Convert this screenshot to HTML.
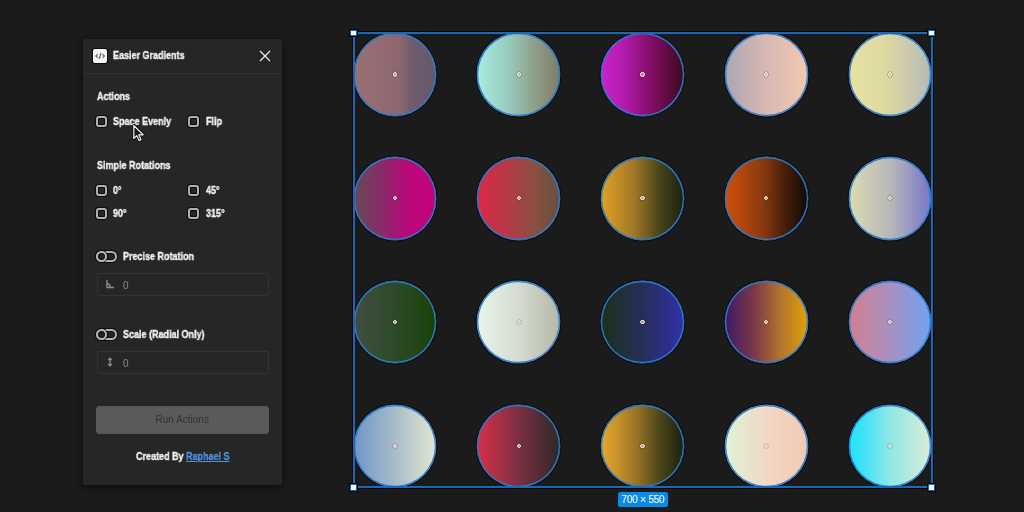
<!DOCTYPE html>
<html><head><meta charset="utf-8">
<style>
*{box-sizing:border-box;margin:0;padding:0}
html,body{width:1024px;height:512px;overflow:hidden;background:#1b1b1b;font-family:"Liberation Sans",sans-serif;position:relative}
.abs{position:absolute}
.panel{position:absolute;left:83px;top:39px;width:198.6px;height:446px;background:#262626;box-shadow:0 2px 9px rgba(0,0,0,.6);border-radius:2px}
.hdr{position:absolute;left:0;top:0;width:199px;height:35px;border-bottom:1px solid #313131}
.t{position:absolute;color:#f2f2f2;font-weight:700;font-size:10px;letter-spacing:0px;-webkit-text-stroke:0.35px #f2f2f2;transform:scaleX(0.9);transform-origin:0 0;will-change:transform;white-space:nowrap;line-height:10px}
.cb{position:absolute;width:11px;height:11px;border:2.2px solid #b0b0b0;border-radius:3px;box-shadow:0 0 0 1px #0c0c0c, inset 0 0 0 1px #0c0c0c}
.tg{position:absolute;width:21px;height:11px;border:2px solid #b4b4b4;border-radius:6px;box-shadow:0 0 0 1px #0c0c0c, inset 0 0 0 1px #0c0c0c}
.tg::after{content:"";box-sizing:border-box;position:absolute;left:-2px;top:-2px;width:11px;height:11px;border:2px solid #b4b4b4;border-radius:50%;box-shadow:0 0 0 1px #0c0c0c, inset 0 0 0 1px #0c0c0c}
.inp{position:absolute;left:13.5px;width:172px;border:1px solid #333;border-radius:2px;background:#262626}
.c{position:absolute;width:82.57px;height:82.57px;border-radius:50%;box-shadow:0 0 0 1.2px #2a7ed0 inset, 0 0 0 0.4px #2a7ed0, 0 0 0 1.4px rgba(0,0,0,.6)}
.dot{position:absolute;width:4.2px;height:4.2px;border-radius:50%;background:rgba(210,180,180,.7);border:1.1px solid #f2e6de;box-shadow:0 0 0 0.5px rgba(0,0,0,.35)}
.sel{position:absolute;left:352.5px;top:32.2px;width:580.0px;height:456.1px;border:2px solid #1b68b8;box-shadow:0 0 0 1px #0c0606}
.h{position:absolute;width:6.6px;height:6.6px;background:#f4fbff;border:1px solid #1a66b4;box-shadow:0 0 0 1px #0c0606}
</style></head><body>
<div class="c" style="left:353.50px;top:33.20px;background:linear-gradient(90deg,#9c7074 0%,#8c6670 55%,#6e5c6c 72%,#66586a 100%)"></div>
<div class="dot" style="left:392.69px;top:72.39px"></div>
<div class="c" style="left:477.36px;top:33.20px;background:linear-gradient(90deg,#a8ece4 0%,#98c8b8 40%,#8e9e88 70%,#807c66 100%)"></div>
<div class="dot" style="left:516.54px;top:72.39px"></div>
<div class="c" style="left:601.21px;top:33.20px;background:linear-gradient(90deg,#cc22cc 0%,#b01aa8 30%,#7a0c5c 65%,#380a1e 100%)"></div>
<div class="dot" style="left:640.40px;top:72.39px"></div>
<div class="c" style="left:725.07px;top:33.20px;background:linear-gradient(90deg,#aca6b2 0%,#d8b8b4 50%,#f2c8b0 100%)"></div>
<div class="dot" style="left:764.26px;top:72.39px"></div>
<div class="c" style="left:848.93px;top:33.20px;background:linear-gradient(90deg,#e8e2a0 0%,#dcd8a0 45%,#c8c8b0 75%,#b6bab2 100%)"></div>
<div class="dot" style="left:888.11px;top:72.39px"></div>
<div class="c" style="left:353.50px;top:157.06px;background:linear-gradient(90deg,#664a58 0%,#8a2a6a 35%,#b80878 65%,#c8007c 100%)"></div>
<div class="dot" style="left:392.69px;top:196.24px"></div>
<div class="c" style="left:477.36px;top:157.06px;background:linear-gradient(90deg,#dc2848 0%,#b83848 35%,#885040 70%,#665040 100%)"></div>
<div class="dot" style="left:516.54px;top:196.24px"></div>
<div class="c" style="left:601.21px;top:157.06px;background:linear-gradient(90deg,#e2a222 0%,#a07828 40%,#4a4418 70%,#18200e 100%)"></div>
<div class="dot" style="left:640.40px;top:196.24px"></div>
<div class="c" style="left:725.07px;top:157.06px;background:linear-gradient(90deg,#d25008 0%,#8a3a10 45%,#401c08 75%,#100806 100%)"></div>
<div class="dot" style="left:764.26px;top:196.24px"></div>
<div class="c" style="left:848.93px;top:157.06px;background:linear-gradient(90deg,#dadcb0 0%,#b8b8b8 50%,#7676ca 100%)"></div>
<div class="dot" style="left:888.11px;top:196.24px"></div>
<div class="c" style="left:353.50px;top:280.91px;background:linear-gradient(90deg,#424e42 0%,#2c4a28 50%,#1a4208 100%)"></div>
<div class="dot" style="left:392.69px;top:320.10px"></div>
<div class="c" style="left:477.36px;top:280.91px;background:linear-gradient(90deg,#e8f4ec 0%,#d4dcd0 50%,#b6b6a6 100%)"></div>
<div class="dot" style="left:516.54px;top:320.10px"></div>
<div class="c" style="left:601.21px;top:280.91px;background:linear-gradient(90deg,#1a3018 0%,#22304a 40%,#2c2e80 75%,#3030aa 100%)"></div>
<div class="dot" style="left:640.40px;top:320.10px"></div>
<div class="c" style="left:725.07px;top:280.91px;background:linear-gradient(90deg,#3e1868 0%,#7a3848 35%,#b07030 65%,#e2a208 100%)"></div>
<div class="dot" style="left:764.26px;top:320.10px"></div>
<div class="c" style="left:848.93px;top:280.91px;background:linear-gradient(90deg,#d28090 0%,#a890c0 50%,#6ea2f2 100%)"></div>
<div class="dot" style="left:888.11px;top:320.10px"></div>
<div class="c" style="left:353.50px;top:404.77px;background:linear-gradient(90deg,#6e96c8 0%,#a8bcc8 50%,#e2e6d2 100%)"></div>
<div class="dot" style="left:392.69px;top:443.96px"></div>
<div class="c" style="left:477.36px;top:404.77px;background:linear-gradient(90deg,#da3048 0%,#7a3040 50%,#2e2828 100%)"></div>
<div class="dot" style="left:516.54px;top:443.96px"></div>
<div class="c" style="left:601.21px;top:404.77px;background:linear-gradient(90deg,#eaaa2a 0%,#a07828 40%,#4a4418 72%,#18200e 100%)"></div>
<div class="dot" style="left:640.40px;top:443.96px"></div>
<div class="c" style="left:725.07px;top:404.77px;background:linear-gradient(90deg,#e0f2d8 0%,#f2d8c4 50%,#f2c8b2 100%)"></div>
<div class="dot" style="left:764.26px;top:443.96px"></div>
<div class="c" style="left:848.93px;top:404.77px;background:linear-gradient(90deg,#22e4fe 0%,#40e2f6 18%,#90e8e4 50%,#dcecd8 100%)"></div>
<div class="dot" style="left:888.11px;top:443.96px"></div>
<div class="sel"></div>
<div class="h" style="left:350.2px;top:29.900000000000002px"></div>
<div class="h" style="left:928.2px;top:29.900000000000002px"></div>
<div class="h" style="left:350.2px;top:484.0px"></div>
<div class="h" style="left:928.2px;top:484.0px"></div>
<div class="abs" style="left:617.8px;top:492.3px;width:50px;height:15px;background:#0c8ae8;border-radius:2.5px;color:#e8f8ff;font-size:10px;letter-spacing:-0.2px;-webkit-text-stroke:0.15px #e8f8ff;line-height:15px;text-align:center;white-space:nowrap;will-change:transform">700 × 550</div>

<div class="panel">
  <div class="hdr"></div>
  <div class="abs" style="left:9.8px;top:9.9px;width:14.2px;height:14px;background:#f4f5f2;border-radius:2px;box-shadow:0 0 0 1px #0c0c0c"></div>
  <svg class="abs" style="left:10px;top:10px" width="14" height="14" viewBox="0 0 14 14"><path d="M4.6 5.2 L2.9 7 L4.6 8.8 M9.6 5.2 L11.3 7 L9.6 8.8 M8 4 L6.2 10" stroke="#666" stroke-width="1.2" fill="none"/></svg>
  <div class="t" style="left:30px;top:12px">Easier Gradients</div>
  <svg class="abs" style="left:176px;top:11px" width="12" height="12" viewBox="0 0 12 12"><path d="M1 1 L11 11 M11 1 L1 11" stroke="#e8e8e8" stroke-width="1.3"/></svg>

  <div class="t" style="left:13.5px;top:53px">Actions</div>
  <div class="cb" style="left:13px;top:77px"></div>
  <div class="t" style="left:30px;top:78px">Space Evenly</div>
  <div class="cb" style="left:105px;top:77px"></div>
  <div class="t" style="left:123px;top:78px">Flip</div>

  <div class="t" style="left:13.5px;top:122px">Simple Rotations</div>
  <div class="cb" style="left:13px;top:146px"></div>
  <div class="t" style="left:30px;top:147px">0°</div>
  <div class="cb" style="left:105px;top:146px"></div>
  <div class="t" style="left:122.5px;top:147px">45°</div>
  <div class="cb" style="left:13px;top:169px"></div>
  <div class="t" style="left:30px;top:170px">90°</div>
  <div class="cb" style="left:105px;top:169px"></div>
  <div class="t" style="left:122.5px;top:170px">315°</div>

  <div class="tg" style="left:13px;top:212px"></div>
  <div class="t" style="left:40px;top:213px">Precise Rotation</div>
  <div class="inp" style="top:234px;height:23px"></div>
  <svg class="abs" style="left:22px;top:240px" width="10" height="10" viewBox="0 0 10 10"><path d="M2 1 V8.5 H9 M2 4.5 Q5 5 5.5 8.5" stroke="#8a8a8a" stroke-width="1.4" fill="none"/></svg>
  <div class="abs" style="left:40px;top:242px;color:#8a8a8a;font-size:10px;line-height:10px;will-change:transform">0</div>

  <div class="tg" style="left:13px;top:290px"></div>
  <div class="t" style="left:40px;top:291px">Scale (Radial Only)</div>
  <div class="inp" style="top:311.5px;height:23px"></div>
  <svg class="abs" style="left:22px;top:318px" width="10" height="10" viewBox="0 0 10 10"><path d="M5 1.2 V8.8 M3.2 3 L5 1.2 L6.8 3 M3.2 7 L5 8.8 L6.8 7" stroke="#8a8a8a" stroke-width="1.4" fill="none"/></svg>
  <div class="abs" style="left:40px;top:319.5px;color:#8a8a8a;font-size:10px;line-height:10px;will-change:transform">0</div>

  <div class="abs" style="left:13px;top:367px;width:172.5px;height:27.5px;background:#5a5a5a;border-radius:4px;color:#333;font-size:10px;will-change:transform;line-height:27.5px;text-align:center">Run Actions</div>

  <div class="t" style="left:53px;top:413px">Created By <span style="color:#4e92dc;-webkit-text-stroke:0.3px #4e92dc;text-decoration:underline;text-decoration-color:#4e92dc">Raphael S</span></div>
</div>
<svg class="abs" style="left:130px;top:122px" width="16" height="22" viewBox="0 0 16 22"><path d="M3.8 3.5 L3.8 16.5 L6.8 13.6 L9 18.6 L11 17.7 L8.9 12.8 L13.2 12.8 Z" fill="#1a1a1a" stroke="#050505" stroke-width="2.8" stroke-linejoin="round"/><path d="M3.8 3.5 L3.8 16.5 L6.8 13.6 L9 18.6 L11 17.7 L8.9 12.8 L13.2 12.8 Z" fill="#1a1a1a" stroke="#f0f0f0" stroke-width="1.2" stroke-linejoin="round"/></svg>
</body></html>
